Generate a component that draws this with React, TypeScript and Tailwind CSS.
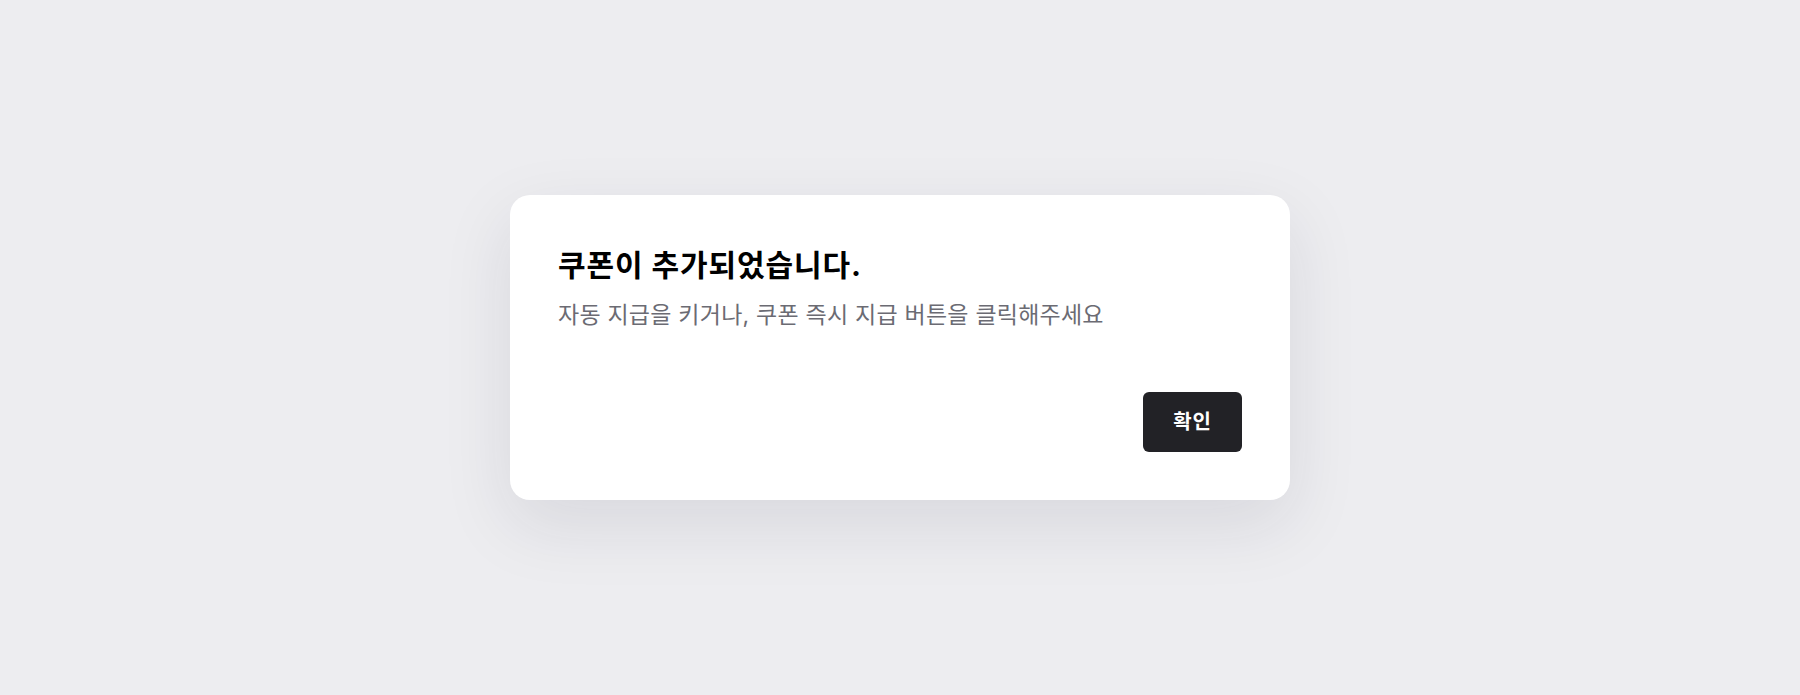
export default function App() {
  return (
    <div className="min-h-screen w-full bg-[#ededf0] flex items-center justify-center font-['Inter','Noto_Sans_CJK_KR',sans-serif]">
      <div className="w-[780px] h-[305px] bg-white rounded-[20px] shadow-[0_24px_70px_rgba(30,30,60,0.10)] px-12 pt-[52px] pb-12 flex flex-col">
        <h1 className="text-[30px] leading-[36px] font-bold text-black tracking-[0.03em]">
          쿠폰이 추가되었습니다.
        </h1>
        <p className="mt-[17px] text-[23px] leading-[30px] text-[#6b6b73] tracking-[0.01em]">
          자동 지급을 키거나, 쿠폰 즉시 지급 버튼을 클릭해주세요
        </p>
        <div className="mt-auto flex justify-end">
          <button className="h-[60px] w-[99px] rounded-[6px] bg-[#222226] text-white text-[20px] font-bold tracking-[0.04em] flex items-center justify-center">
            확인
          </button>
        </div>
      </div>
    </div>
  );
}
